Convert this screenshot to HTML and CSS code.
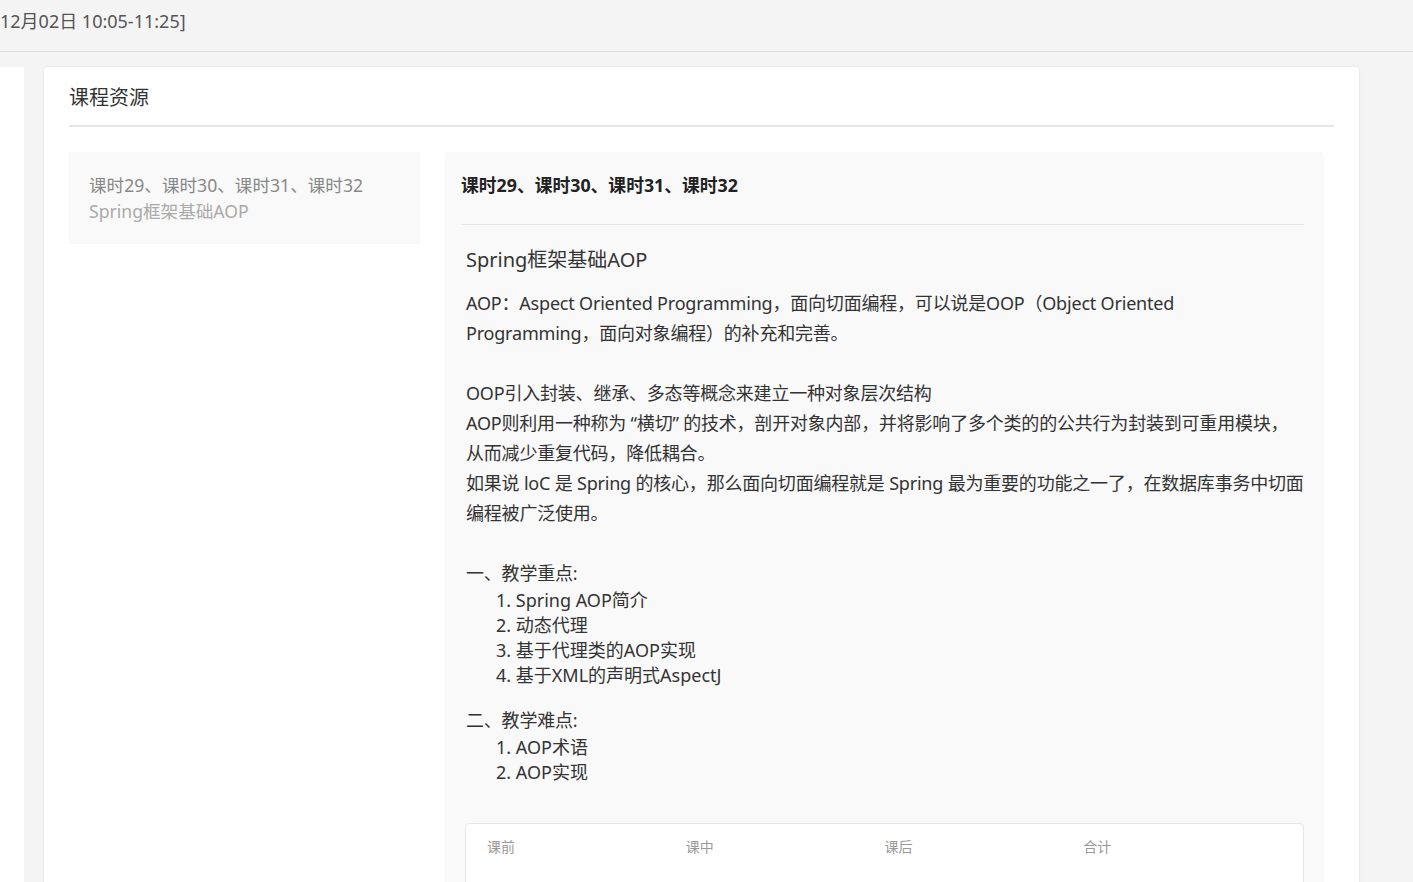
FILE: index.html
```html
<!DOCTYPE html>
<html lang="zh">
<head>
<meta charset="utf-8">
<title>课程资源</title>
<link rel="stylesheet" href="styles.css">
</head>
<body>
<div class="topbar"><span class="time">12月02日 10:05-11:25]</span></div>
<div class="main">
  <div class="side"></div>
  <div class="card">
    <div class="card-head">课程资源</div>
    <div class="card-body">
      <div class="list">
        <div class="item">
          <div class="item-title">课时29、课时30、课时31、课时32</div>
          <div class="item-sub">Spring框架基础AOP</div>
        </div>
      </div>
      <div class="detail">
        <div class="detail-title">课时29、课时30、课时31、课时32</div>
        <div class="detail-content">
          <div class="topic">Spring框架基础AOP</div>
          <div class="para">AOP：Aspect Oriented Programming，面向切面编程，可以说是OOP（Object Oriented<br>Programming，面向对象编程）的补充和完善。<br><br>OOP引入封装、继承、多态等概念来建立一种对象层次结构<br>AOP则利用一种称为 “横切” 的技术，剖开对象内部，并将影响了多个类的的公共行为封装到可重用模块，<br>从而减少重复代码，降低耦合。<br>如果说 loC 是 Spring 的核心，那么面向切面编程就是 Spring 最为重要的功能之一了，在数据库事务中切面<br>编程被广泛使用。<br><br>一、教学重点:</div>
          <div class="points">
            <div>1. Spring AOP简介</div>
            <div>2. 动态代理</div>
            <div>3. 基于代理类的AOP实现</div>
            <div>4. 基于XML的声明式AspectJ</div>
          </div>
          <div class="para">二、教学难点:</div>
          <div class="points">
            <div>1. AOP术语</div>
            <div>2. AOP实现</div>
          </div>
          <div class="stats">
            <div class="stat">课前</div>
            <div class="stat">课中</div>
            <div class="stat">课后</div>
            <div class="stat">合计</div>
          </div>
        </div>
      </div>
    </div>
  </div>
</div>
</body>
</html>
```
FILE: styles.css
```css
html, body {
  margin: 0;
  padding: 0;
  background: #f4f4f4;
  font-family: "Noto Sans", "Noto Sans CJK SC", sans-serif;
  color: #333;
  overflow: hidden;
}
.topbar {
  height: 51px;
  border-bottom: 1px solid #dcdcdc;
  display: flex;
  align-items: center;
}
.time {
  font-size: 18px;
  color: #555;
  line-height: 26px;
  margin-top: -10px;
}
.main {
  display: flex;
  gap: 20px;
  padding-top: 15px;
  height: 900px;
}
.side {
  width: 24px;
  background: #fff;
  flex: none;
}
.card {
  width: 1315px;
  flex: none;
  background: #fff;
  border-radius: 4px;
  box-shadow: 0 0 3px rgba(0,0,0,0.08);
  padding: 0 25px;
  box-sizing: border-box;
}
.card-head {
  font-size: 20px;
  line-height: 26px;
  padding: 18px 0 14px;
  border-bottom: 2px solid #e6e6e6;
  color: #333;
}
.card-body {
  display: flex;
  gap: 25px;
  padding-top: 25px;
}
.list {
  width: 351px;
  flex: none;
}
.item {
  background: #f9f9f9;
  padding: 20px 20px 20px;
  font-size: 17.6px;
  line-height: 26px;
}
.item-title { color: #888; }
.item-sub { color: #aaa; }
.detail {
  width: 879px;
  flex: none;
  background: #f9f9f9;
  border-radius: 4px;
  padding: 20px 20px 0;
  box-sizing: border-box;
}
.detail-title {
  font-size: 17.8px;
  font-weight: bold;
  line-height: 26px;
  padding: 0 0 26px 0;
  margin-left: -4px;
  border-bottom: 1px solid #e6e6e6;
  color: #222;
}
.detail-content {
  padding-left: 1px;
}
.topic {
  font-size: 20px;
  line-height: 30px;
  margin-top: 20px;
  margin-bottom: 13px;
}
.para {
  font-size: 18px;
  line-height: 30px;
  white-space: nowrap;
  letter-spacing: -0.2px;
}
.points {
  font-size: 18px;
  line-height: 25px;
  padding-left: 30px;
  margin-bottom: 17px;
}
.stats {
  margin-top: 38px;
  margin-left: -1px;
  background: #fff;
  border: 1px solid #e6e6e6;
  border-radius: 4px;
  display: flex;
  padding: 13px 21px 40px;
}
.stat {
  width: 199px;
  font-size: 14px;
  line-height: 20px;
  color: #999;
}
```
